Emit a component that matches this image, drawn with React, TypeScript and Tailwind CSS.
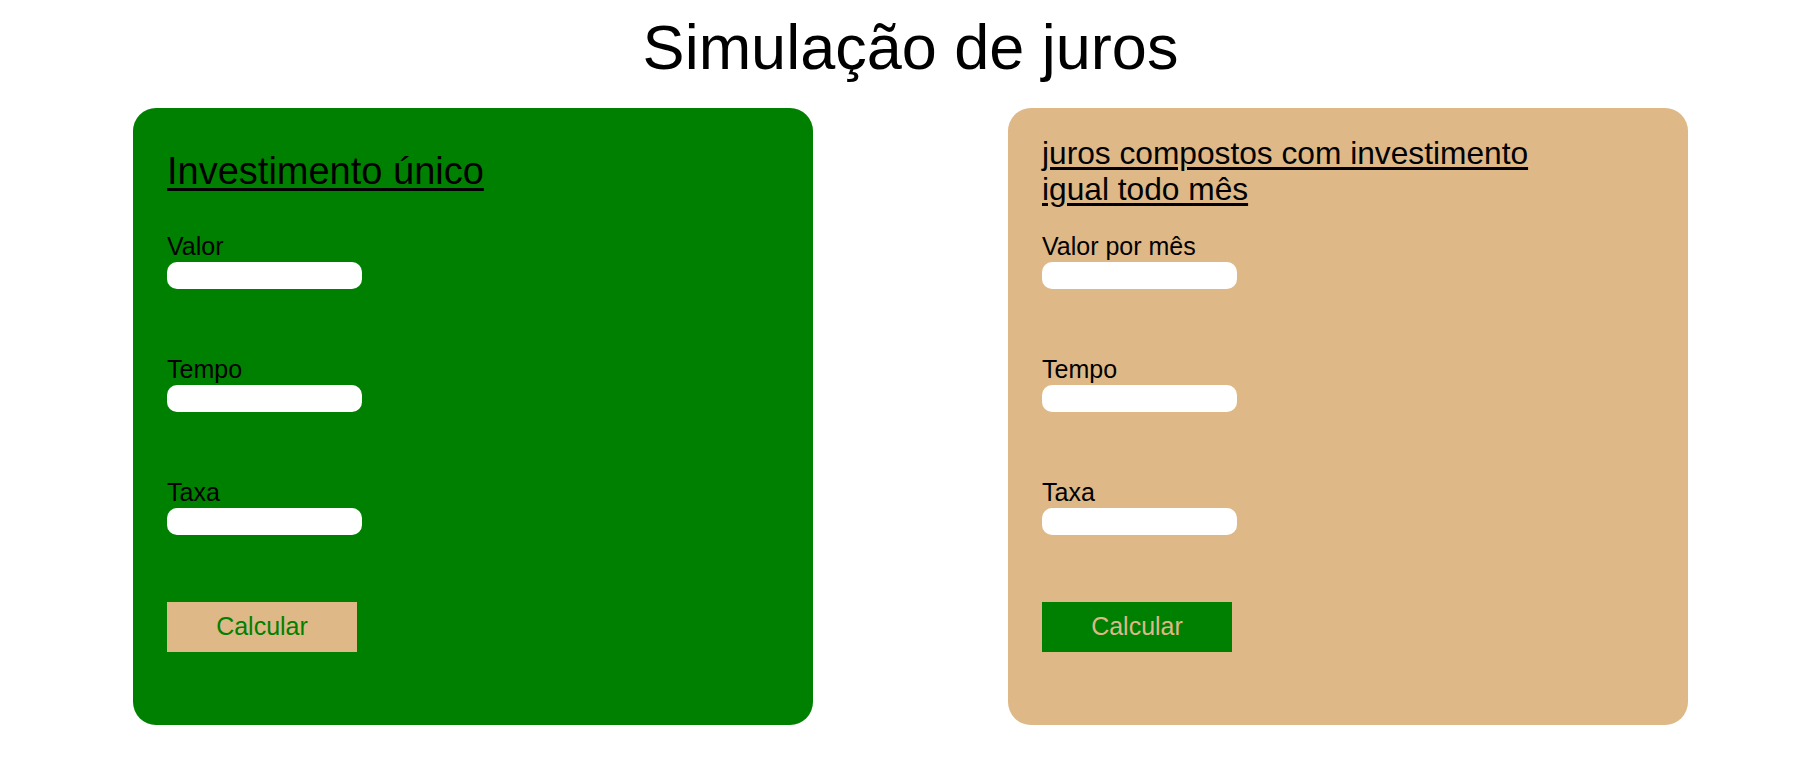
import React from "react";

type Field = { label: string };

interface CardProps {
    title: string;
    fields: Field[];
    variant: "green" | "tan";
}

function Card({ title, fields, variant }: CardProps) {
    const isGreen = variant === "green";
    return (
        <div
            className={`w-[680px] h-[617px] rounded-[23px] px-[34px] pt-[34px] ${isGreen ? "bg-[#008000]" : "bg-[#deb887]"}`}
        >
            {/* header box keeps labels aligned between cards */}
            <div className="h-[58px] mb-[32px] flex items-center">
                {isGreen ? (
                    <h2 className="text-[38px] leading-[44px] font-normal underline underline-offset-[4px] text-black">
                        {title}
                    </h2>
                ) : (
                    <h2 className="text-[31.7px] leading-[36px] font-normal underline underline-offset-[3px] text-black max-w-[520px]">
                        {title}
                    </h2>
                )}
            </div>

            <form className="flex flex-col" onSubmit={(e) => e.preventDefault()}>
                {fields.map((f) => (
                    <div key={f.label} className="flex flex-col mb-[66px]">
                        <label className="text-[25px] leading-[29px] text-black">{f.label}</label>
                        <input
                            type="text"
                            className="mt-[1px] w-[195px] h-[27px] rounded-[10px] bg-white border-0 outline-none px-2"
                        />
                    </div>
                ))}
                <button
                    type="submit"
                    className={`mt-[1px] w-[190px] h-[50px] text-[25px] ${isGreen ? "bg-[#deb887] text-[#008000]" : "bg-[#008000] text-[#deb887]"}`}
                >
                    Calcular
                </button>
            </form>
        </div>
    );
}

export default function App() {
    return (
        <div className="min-h-screen bg-white font-['Liberation_Sans',Arial,sans-serif]">
            <div className="ml-[133px] w-[1555px] pt-[12px]">
                <h1 className="text-center text-[63px] leading-[71px] font-normal text-black mb-[25px]">
                    Simulação de juros
                </h1>
                <div className="flex gap-[195px]">
                    <Card
                        variant="green"
                        title="Investimento único"
                        fields={[{ label: "Valor" }, { label: "Tempo" }, { label: "Taxa" }]}
                    />
                    <Card
                        variant="tan"
                        title="juros compostos com investimento igual todo mês"
                        fields={[{ label: "Valor por mês" }, { label: "Tempo" }, { label: "Taxa" }]}
                    />
                </div>
            </div>
        </div>
    );
}
